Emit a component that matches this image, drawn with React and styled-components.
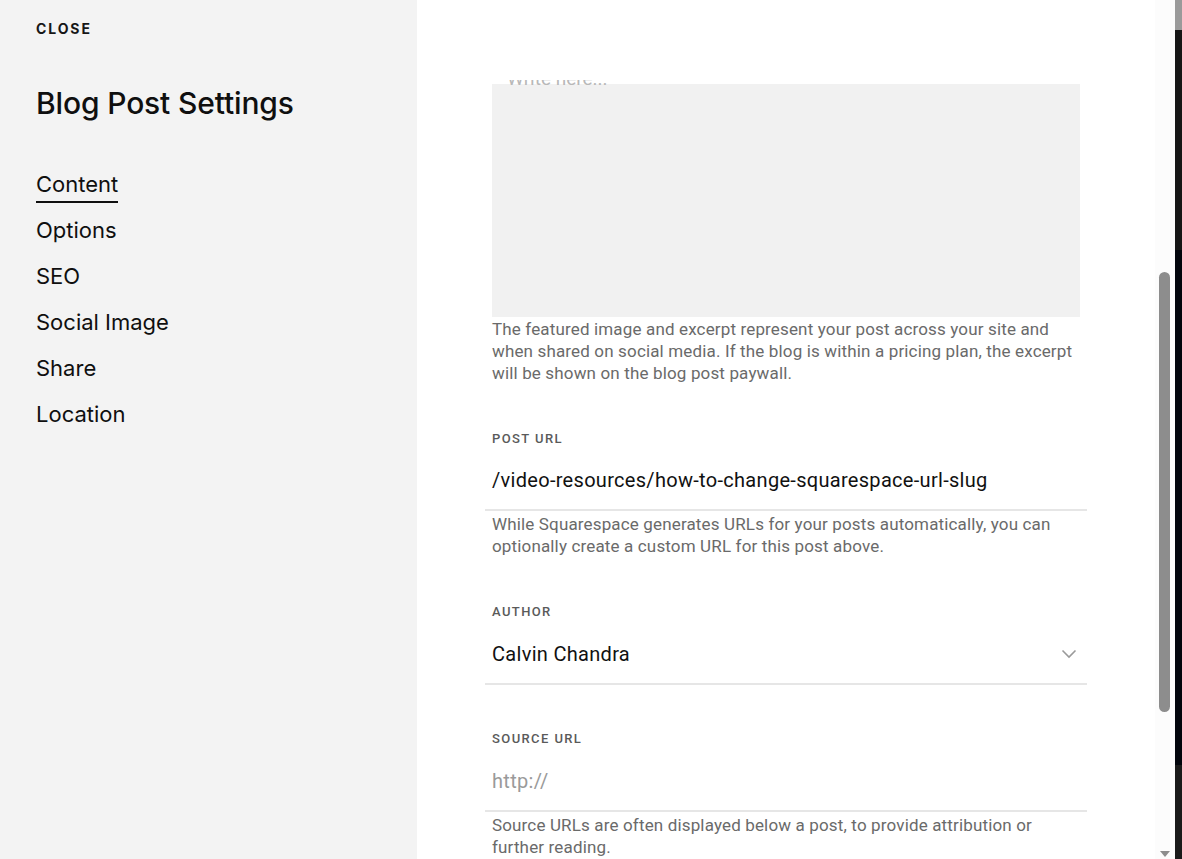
import React from 'react';
import styled, { createGlobalStyle } from 'styled-components';

const GlobalStyle = createGlobalStyle`
    html, body {
        margin: 0;
        padding: 0;
        height: 100%;
        overflow: hidden;
    }
    body {
        font-family: "Inter", "Roboto", sans-serif;
        color: #111;
    }
    #root {
        height: 100%;
    }
`;

const Page = styled.div`
    display: flex;
    height: 100vh;
    width: 100%;
`;

// left column
const Sidebar = styled.aside`
    width: 417px;
    flex-shrink: 0;
    background: #f3f3f3;
    padding: 21px 0 0 36px;
    box-sizing: border-box;
    font-family: "Inter", sans-serif;
`;

const CloseLink = styled.div`
    font-size: 14px;
    line-height: 16px;
    font-weight: 700;
    letter-spacing: 1.9px;
    color: #161616;
    cursor: pointer;
`;

const Title = styled.h1`
    margin: 48px 0 0;
    font-size: 30px;
    line-height: 36px;
    font-weight: 500;
    letter-spacing: -0.15px;
    color: #0f0f0f;
`;

const Nav = styled.nav`
    display: flex;
    flex-direction: column;
    align-items: flex-start;
    gap: 18px;
    margin-top: 49px;
`;

const NavItem = styled.div`
    font-size: 22px;
    line-height: 28px;
    font-weight: 400;
    color: #0f0f0f;
    cursor: pointer;
    position: relative;
    &::after {
        content: "";
        display: ${props => props.active ? 'block' : 'none'};
        position: absolute;
        left: 0;
        right: 0;
        bottom: -5px;
        height: 2px;
        background: #0f0f0f;
    }
`;

// main column
const Main = styled.main`
    flex: 1;
    background: #fff;
    padding-top: 80px;
    display: flex;
    flex-direction: column;
    min-width: 0;
`;

const Viewport = styled.div`
    flex: 1;
    overflow: hidden;
    padding-left: 68px;
`;

const Column = styled.div`
    width: 602px;
    font-family: "Roboto", sans-serif;
`;

const ExcerptBox = styled.div`
    position: relative;
    margin: 4px 7px 0;
    height: 233px;
    background: #f1f1f1;
`;

const Placeholder = styled.span`
    position: absolute;
    top: -15px;
    left: 15px;
    font-size: 19px;
    line-height: 20px;
    color: #b8b8b8;
`;

const Help = styled.p`
    margin: ${props => props.top || 2}px 7px 0;
    font-size: 17px;
    line-height: 22px;
    letter-spacing: 0.15px;
    color: #6a6a6a;
`;

const Field = styled.div`
    margin-top: ${props => props.top}px;
`;

const Label = styled.div`
    padding: 0 7px;
    font-size: 13px;
    line-height: 16px;
    font-weight: 500;
    letter-spacing: 1.4px;
    color: #5a5a5a;
`;

const InputRow = styled.div`
    display: flex;
    align-items: center;
    justify-content: space-between;
    margin-top: ${props => props.gap || 11}px;
    padding: 10px 7px 17px;
    border-bottom: 2px solid #e6e6e6;
`;

const Value = styled.span`
    font-size: 20px;
    line-height: 24px;
    letter-spacing: 0.3px;
    color: ${props => props.muted ? '#9a9a9a' : '#111'};
`;

const Chevron = styled.svg`
    width: 16px;
    height: 10px;
    margin-right: 3px;
`;

// window chrome on the right
const ScrollTrack = styled.div`
    width: 20px;
    flex-shrink: 0;
    background: #fcfcfc;
    position: relative;
`;

const Thumb = styled.div`
    position: absolute;
    left: 4px;
    top: 272px;
    width: 11px;
    height: 440px;
    border-radius: 6px;
    background: #8d8d8d;
`;

const DownArrow = styled.div`
    position: absolute;
    left: 5px;
    bottom: 2px;
    width: 0;
    height: 0;
    border-left: 5px solid transparent;
    border-right: 5px solid transparent;
    border-top: 6px solid #8d8d8d;
`;

const BackStrip = styled.div`
    width: 7px;
    flex-shrink: 0;
    background: linear-gradient(
        to bottom,
        #9a9a9a 0px, #9a9a9a 30px,
        #161616 30px, #161616 250px,
        #02050c 250px, #02050c 765px,
        #1a1a1a 765px
    );
`;

const navItems = ["Content", "Options", "SEO", "Social Image", "Share", "Location"];

function App() {
    return (
        <Page>
            <GlobalStyle />
            <Sidebar>
                <CloseLink>CLOSE</CloseLink>
                <Title>Blog Post Settings</Title>
                <Nav>
                    {navItems.map((item, i) => (
                        <NavItem key={item} active={i === 0}>{item}</NavItem>
                    ))}
                </Nav>
            </Sidebar>

            <Main>
                <Viewport>
                    <Column>
                        <ExcerptBox>
                            <Placeholder>Write here...</Placeholder>
                        </ExcerptBox>
                        <Help top={1}>
                            The featured image and excerpt represent your post across your site and
                            when shared on social media. If the blog is within a pricing plan, the excerpt
                            will be shown on the blog post paywall.
                        </Help>

                        <Field top={47}>
                            <Label>POST URL</Label>
                            <InputRow gap={11}>
                                <Value>/video-resources/how-to-change-squarespace-url-slug</Value>
                            </InputRow>
                            <Help top={2}>
                                While Squarespace generates URLs for your posts automatically, you can
                                optionally create a custom URL for this post above.
                            </Help>
                        </Field>

                        <Field top={47}>
                            <Label>AUTHOR</Label>
                            <InputRow gap={12}>
                                <Value>Calvin Chandra</Value>
                                <Chevron viewBox="0 0 16 10" fill="none">
                                    <polyline points="1.5,1.5 8,8 14.5,1.5" stroke="#9a9a9a" strokeWidth="1.6" />
                                </Chevron>
                            </InputRow>
                        </Field>

                        <Field top={46}>
                            <Label>SOURCE URL</Label>
                            <InputRow gap={12}>
                                <Value muted>http://</Value>
                            </InputRow>
                            <Help top={2}>
                                Source URLs are often displayed below a post, to provide attribution or
                                further reading.
                            </Help>
                        </Field>
                    </Column>
                </Viewport>
            </Main>

            <ScrollTrack>
                <Thumb />
                <DownArrow />
            </ScrollTrack>
            <BackStrip />
        </Page>
    );
}

export default App;
